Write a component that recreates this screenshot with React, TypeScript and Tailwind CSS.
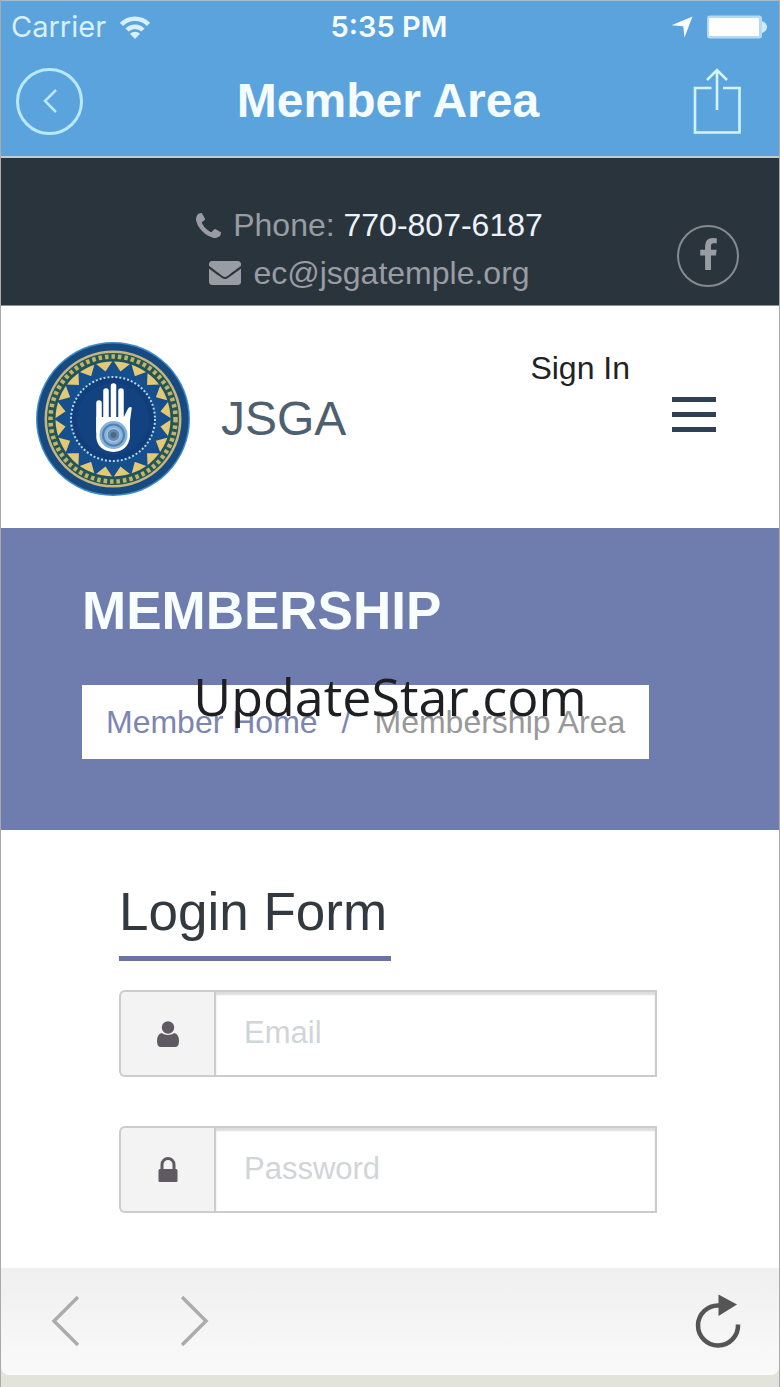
import { useState } from "react";
import { FaEnvelope } from "react-icons/fa";

// Points for a ring of triangles around the emblem centre
function spikes(count: number, inner: number, outer: number) {
  const points: string[] = [];
  for (let i = 0; i < count * 2; i++) {
    const radius = i % 2 === 0 ? outer : inner;
    const angle = (Math.PI * i) / count - Math.PI / 2;
    points.push(`${78 + radius * Math.cos(angle)},${78 + radius * Math.sin(angle)}`);
  }
  return points.join(" ");
}

function WifiIcon() {
  return (
    <svg viewBox="0 0 30 23" className="h-[23px] w-[30px]" fill="none" stroke="currentColor" strokeWidth="4.500" aria-hidden="true">
      <path d="M1.500 8.500a19 19 0 0 1 27 0" />
      <path d="M7 14a11.500 11.500 0 0 1 16 0" />
      <path d="M15 23l-5-5.200a7 7 0 0 1 10 0z" fill="currentColor" stroke="none" />
    </svg>
  );
}

function LocationIcon() {
  return (
    <svg viewBox="0 0 22 22" className="h-[22px] w-[22px]" fill="currentColor" aria-hidden="true">
      <path d="M21.500.5L13.500 21.500l-1.300-11.300L.5 9.200z" />
    </svg>
  );
}

function BatteryIcon() {
  return (
    <svg viewBox="0 0 60 24" className="h-6 w-[60px]" aria-hidden="true">
      <rect x="0" y="0.500" width="55" height="23" rx="3" fill="#b5daf3" />
      <rect x="2" y="3" width="50" height="18" rx="1" fill="#fff" />
      <path d="M55 6q5 2 5 6t-5 6z" fill="#cdebfb" />
    </svg>
  );
}

function ShareIcon() {
  return (
    <svg viewBox="0 0 48 66" className="h-[66px] w-12" fill="none" stroke="currentColor" strokeWidth="2.600" aria-hidden="true">
      <path d="M18.500 20H2v44.500h44.500V20H30" />
      <path d="M24 42V2M14 12L24 2l10 10" />
    </svg>
  );
}

function PhoneIcon() {
  return (
    <svg viewBox="0 128 1408 1408" className="h-[25px] w-[25px]" fill="currentColor" aria-hidden="true">
      <path d="M1408 1240q0 27-10 70.500t-21 68.500q-21 50-122 106-94 51-186 51-27 0-53-3.500t-57.500-12.500-47-14.500-55.500-20.500-49-18q-98-35-175-83-127-79-264-216t-216-264q-48-77-83-175-3-9-18-49t-20.500-55.500-14.500-47-12.500-57.500-3.500-53q0-92 51-186 56-101 106-122 25-11 68.500-21t70.500-10q14 0 21 3 18 6 53 76 11 19 30 54t35 63.500 31 53.500q3 4 17.500 25t21.500 35.500 7 28.500q0 20-28.500 50t-62 55-62 53-28.500 46q0 9 5 22.500t8.500 20.500 14 24 11.500 19q76 137 174 235t235 174q2 1 19 11.500t24 14 20.500 8.500 22.500 5q18 0 46-28.500t53-62 55-62 50-28.500q14 0 28.500 7t35.500 21.500 25 17.500q25 15 53.500 31t63.500 35 54 30q70 35 76 53 3 7 3 21z" />
    </svg>
  );
}

function FacebookIcon() {
  return (
    <svg viewBox="95 0 864 1664" className="mb-1 h-8 w-[17px]" fill="currentColor" aria-hidden="true">
      <path d="M959 12v264h-157q-86 0-116 36t-30 108v189h293l-39 296h-254v759h-306v-759h-255v-296h255v-218q0-186 104-288.500t277-102.500q147 0 228 12z" />
    </svg>
  );
}

// Temple emblem: patterned rings with an open palm
function Emblem() {
  return (
    <svg viewBox="0 0 156 156" className="h-[156px] w-[156px] shrink-0" aria-hidden="true">
      <circle cx="78" cy="78" r="77" fill="#3f8cc5" />
      <circle cx="78" cy="78" r="75.500" fill="#174a80" />
      <circle cx="78" cy="78" r="68.500" fill="#c5b583" />
      <circle cx="78" cy="78" r="66" fill="#28574f" />
      <circle cx="78" cy="78" r="62.500" fill="none" stroke="#bdb475" strokeWidth="4.500" strokeDasharray="3.500 3" />
      <circle cx="78" cy="78" r="59" fill="#1c5364" />
      <circle cx="78" cy="78" r="57.500" fill="#e3c875" />
      <polygon points={spikes(20, 47, 57.5)} fill="#164f8d" stroke="#164f8d" strokeWidth="1.500" />
      <circle cx="78" cy="78" r="42" fill="#103e7b" stroke="#b9d5eb" strokeWidth="2" strokeDasharray="2 2" />
      <circle cx="78" cy="78" r="36" fill="#12427f" />
      <g stroke="#fff" strokeWidth="5.500" strokeLinecap="round">
        <path d="M64 62v28M71 50v38M78.500 45v40M86 50v38" />
      </g>
      <path d="M61.300 76h27.500l4-8q1.500-3 4-1.500L95 80v16q-2 14-16.500 15-15.500-1-17.200-14z" fill="#fff" />
      <circle cx="78.500" cy="94" r="14" fill="#8ab2d7" />
      <circle cx="78.500" cy="94" r="10.500" fill="none" stroke="#4a83b5" strokeWidth="2" />
      <circle cx="78.500" cy="94" r="6.500" fill="#5c8db9" stroke="#b9d0e4" />
      <circle cx="78.500" cy="94" r="3" fill="#52677e" />
    </svg>
  );
}

function UserIcon() {
  return (
    <svg viewBox="0 0 22 26" className="h-[26px] w-[22px]" fill="currentColor" aria-hidden="true">
      <circle cx="11" cy="6.500" r="6.200" />
      <path d="M4.500 12q6.500 4 13 0 4.500 1.500 4.500 8 0 6-4 6H4q-4 0-4-6 0-6.500 4.500-8z" />
    </svg>
  );
}

function LockIcon() {
  return (
    <svg viewBox="0 0 20 25" className="h-[25px] w-5" fill="none" aria-hidden="true">
      <path d="M4 13V7.500a6 6 0 0 1 12 0V13" stroke="currentColor" strokeWidth="3" />
      <rect x="0.500" y="12" width="19" height="13" rx="1.500" fill="currentColor" />
    </svg>
  );
}

interface FieldProps {
  id: string;
  label: string;
  type: string;
  icon: React.ReactNode;
  value: string;
  onChange: (value: string) => void;
}

function Field({ id, label, type, icon, value, onChange }: FieldProps) {
  return (
    <div className="flex h-[87px]">
      <label
        htmlFor={id}
        aria-label={label}
        className="flex w-[95px] shrink-0 items-center justify-center rounded-l-md border-2 border-r-0 border-[#cccccc] bg-[#f3f3f3] text-[#5f5a62]"
      >
        {icon}
      </label>
      <input
        id={id}
        type={type}
        placeholder={label}
        value={value}
        onChange={(e) => onChange(e.target.value)}
        className="min-w-0 flex-1 border-2 border-[#cccccc] bg-white px-7 text-[31px] text-[#555555] shadow-[inset_0_3px_2px_#dddddd] outline-none placeholder:text-[#d0d5d8]"
      />
    </div>
  );
}

export default function App() {
  const [email, setEmail] = useState("");
  const [password, setPassword] = useState("");

  return (
    <div className="relative flex min-h-screen flex-col border-x border-[#aaaaaa] bg-white font-['Liberation_Sans',Arial,sans-serif]">
      {/* Status bar and title */}
      <header className="border-t border-b-2 border-t-[#a5bccb] border-b-[#b9cedb] bg-[#5ba3dc] text-[#f4fcff]">
        <div className="grid h-12 grid-cols-3 items-center pt-1 pr-3 pl-[10px] font-[Inter,sans-serif] text-[29px]">
          <div className="flex items-center gap-[14px] text-[#d9f0fc]">
            Carrier
            <WifiIcon />
          </div>
          <div className="text-center font-semibold">5:35 PM</div>
          <div className="flex items-center justify-end gap-[14px]">
            <LocationIcon />
            <BatteryIcon />
          </div>
        </div>
        <div className="flex h-[107px] items-center justify-between pr-[38px] pb-[3px] pl-[15px]">
          <button type="button" aria-label="Back" className="flex h-[67px] w-[67px] items-center justify-center rounded-full border-[3px] border-[#b9e9ff] text-[#b9e9ff]">
            <svg viewBox="0 0 14 24" className="h-6 w-[14px]" fill="none" stroke="currentColor" strokeWidth="2.500" aria-hidden="true">
              <path d="M13 1L2 12l11 11" />
            </svg>
          </button>
          <div className="text-5xl font-bold">Member Area</div>
          <button type="button" aria-label="Share" className="text-[#d3f3ff]">
            <ShareIcon />
          </button>
        </div>
      </header>

      {/* Contact details */}
      <div className="flex h-[148px] items-start border-b border-[#8c9195] bg-[#2a343d] pt-[43px] pr-10 pl-[61px] text-[#999ca2]">
        <address className="flex flex-1 flex-col items-center text-[32px] leading-[48px] not-italic">
          <div className="flex items-center gap-3">
            <PhoneIcon />
            <span>
              Phone: <a href="tel:770-807-6187" className="text-[#edf3f9]">770-807-6187</a>
            </span>
          </div>
          <a href="mailto:ec@jsgatemple.org" className="flex items-center gap-3">
            <FaEnvelope className="h-8 w-8" />
            ec@jsgatemple.org
          </a>
        </address>
        <a href="#facebook" aria-label="Facebook" className="mt-6 flex h-[62px] w-[62px] shrink-0 items-center justify-center rounded-full border-2 border-[#858a90]">
          <FacebookIcon />
        </a>
      </div>

      {/* Site header */}
      <div className="flex h-[222px] items-start pt-[35px] pr-[63px] pl-[34px]">
        <a href="#home" className="flex items-center gap-[30px] text-5xl text-[#4d6070]">
          <Emblem />
          JSGA
        </a>
        <div className="ml-auto flex items-start gap-[42px]">
          <a href="#signin" className="pt-[7px] text-[32px] leading-10 text-[#222222]">Sign In</a>
          <button type="button" aria-label="Menu" className="mt-14 flex w-11 flex-col gap-[10px]">
            <span className="h-[5px] w-full bg-[#2f3f56]" />
            <span className="h-[5px] w-full bg-[#2f3f56]" />
            <span className="h-[5px] w-full bg-[#2f3f56]" />
          </button>
        </div>
      </div>

      {/* Page title and breadcrumb */}
      <div className="h-[302px] bg-[#6e7cae] px-[81px] pt-[51px]">
        <h1 className="text-[53px] leading-[64px] font-bold text-[#f8fdff]">MEMBERSHIP</h1>
        <nav aria-label="Breadcrumb" className="mt-[42px] flex h-[74px] w-fit items-center gap-6 bg-white px-6 text-[32px] whitespace-nowrap text-[#7c86b0]">
          <a href="#member-home">Member Home</a>
          <span>/</span>
          <span className="text-[#999999]">Membership Area</span>
        </nav>
      </div>

      {/* Login form */}
      <main className="flex-1 pt-[50px] pr-[122px] pb-[55px] pl-[118px]">
        <h2 className="w-fit border-b-[5px] border-[#6c73a0] pr-1 pb-3 text-[53px] leading-[64px] text-[#333a3f]">Login Form</h2>
        <form className="mt-[29px] flex flex-col gap-[49px]" onSubmit={(e) => e.preventDefault()}>
          <Field id="email" label="Email" type="email" icon={<UserIcon />} value={email} onChange={setEmail} />
          <Field id="password" label="Password" type="password" icon={<LockIcon />} value={password} onChange={setPassword} />
        </form>
      </main>

      {/* Browser toolbar */}
      <footer className="bg-[#e2e3da] pb-3">
        <div className="flex h-[107px] items-center rounded-b-lg bg-linear-to-b from-[#efefef] to-[#fafafa] pr-[38px] pb-px pl-[50px] text-[#acacac]">
          <button type="button" aria-label="Previous page">
            <svg viewBox="0 0 28 50" className="h-[50px] w-7" fill="none" stroke="currentColor" strokeWidth="3.500" aria-hidden="true">
              <path d="M27 1L3 25l24 24" />
            </svg>
          </button>
          <button type="button" aria-label="Next page" className="ml-[102px]">
            <svg viewBox="0 0 28 50" className="h-[50px] w-7" fill="none" stroke="currentColor" strokeWidth="3.500" aria-hidden="true">
              <path d="M1 1l24 24L1 49" />
            </svg>
          </button>
          <button type="button" aria-label="Reload" className="ml-auto text-[#555555]">
            <svg viewBox="0 0 46 54" className="h-[54px] w-[46px]" fill="none" aria-hidden="true">
              <path d="M24 11.500A20 20 0 1 0 43 30.500" stroke="currentColor" strokeWidth="4.500" />
              <path d="M23.500 0.500L42 10.500 23.500 22z" fill="currentColor" />
            </svg>
          </button>
        </div>
      </footer>

      {/* Watermark */}
      <div className="pointer-events-none absolute inset-0 flex items-center justify-center pt-1 font-['Open_Sans','Noto_Sans',sans-serif] text-[52px] text-[#1d1f22]">
        UpdateStar.com
      </div>
    </div>
  );
}
